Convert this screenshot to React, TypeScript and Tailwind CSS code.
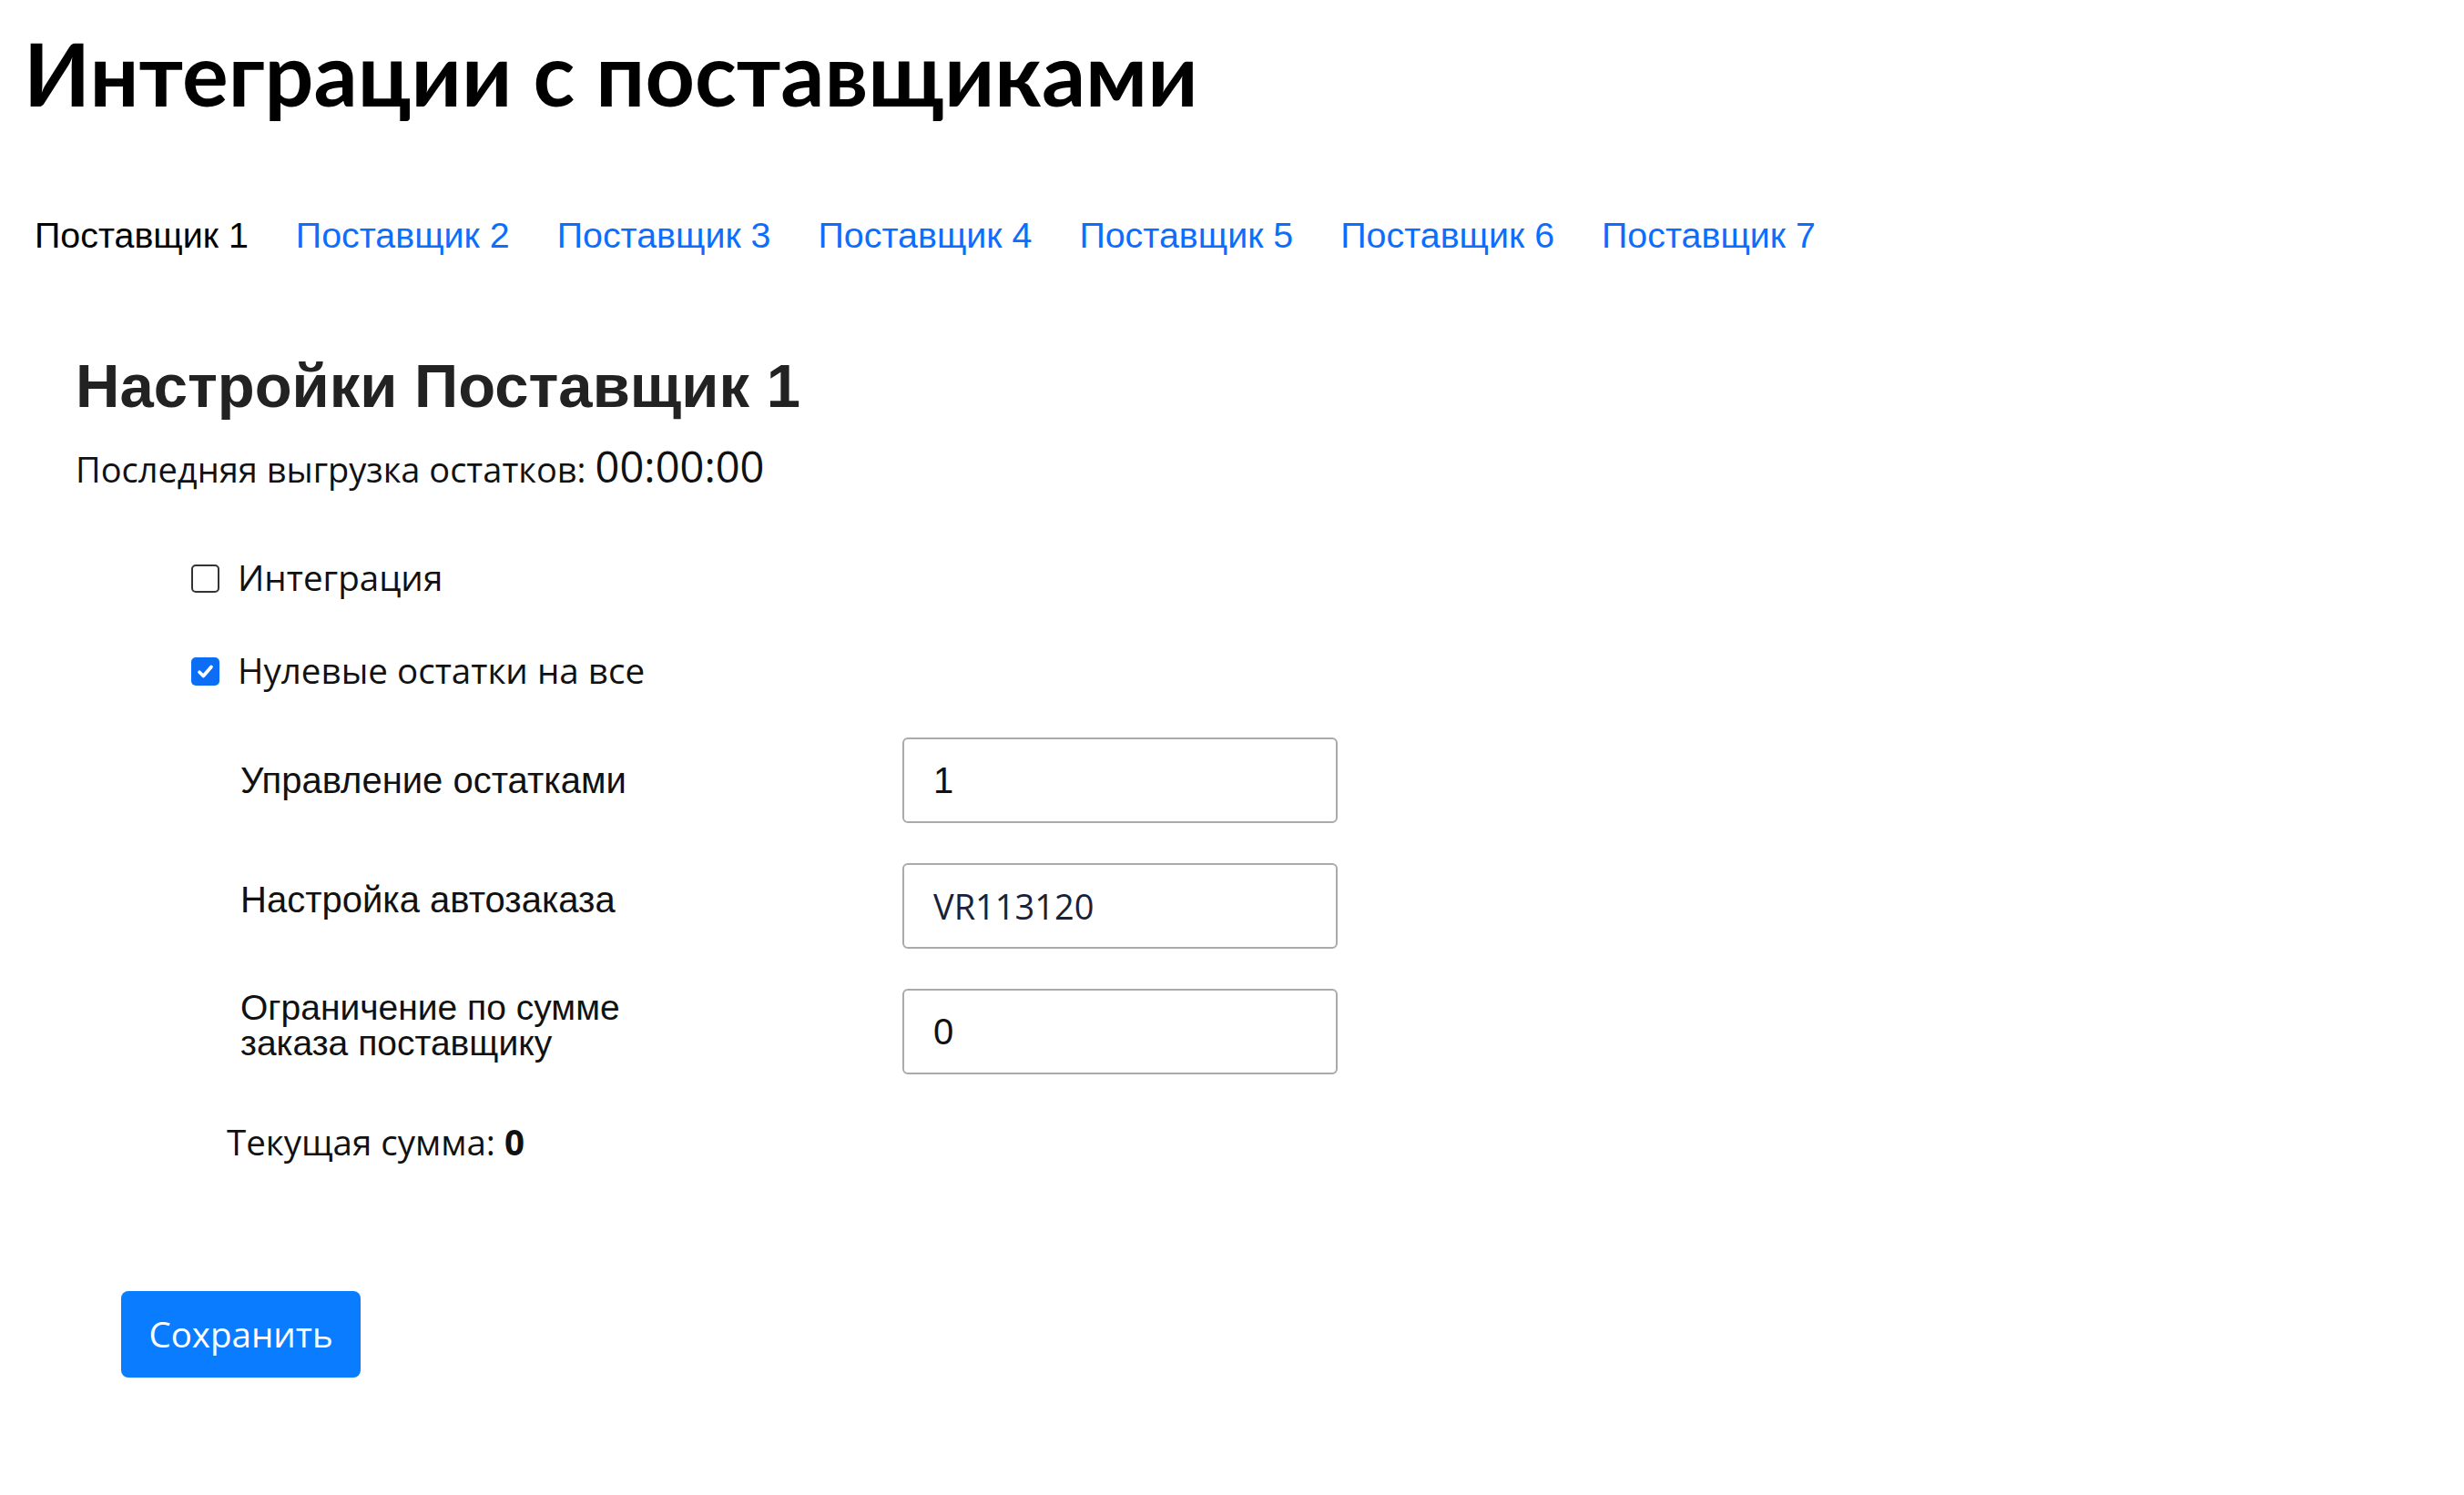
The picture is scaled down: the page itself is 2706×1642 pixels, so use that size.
import React from 'react';

const suppliers = [
  'Поставщик 1',
  'Поставщик 2',
  'Поставщик 3',
  'Поставщик 4',
  'Поставщик 5',
  'Поставщик 6',
  'Поставщик 7',
];

const Checkbox: React.FC<{ checked?: boolean }> = ({ checked }) =>
  checked ? (
    <span className="flex h-[31px] w-[31px] shrink-0 items-center justify-center rounded-[5px] bg-[#0b6ef5]">
      <svg viewBox="0 0 16 16" className="h-[23px] w-[23px]" fill="none" stroke="white" strokeWidth="2.6" strokeLinecap="round" strokeLinejoin="round">
        <path d="M3.5 8.5l3 3 6-7" />
      </svg>
    </span>
  ) : (
    <span className="h-[31px] w-[31px] shrink-0 rounded-[5px] border-[2.5px] border-[#333] bg-white" />
  );

const App: React.FC = () => {
  return (
    <div className="min-h-screen bg-white text-[#212529]">
      <h1 className="pl-[26px] pt-[23px] font-['Lato',sans-serif] text-[95px] font-bold leading-[1.2] text-black">
        Интеграции с поставщиками
      </h1>

      {/* Tabs */}
      <nav className="mt-[97px] flex gap-[52px] pl-[38px] font-['Liberation_Sans',Arial,sans-serif] text-[39.4px] leading-[48px]">
        {suppliers.map((s, i) => (
          <a key={s} href="#" className={i === 0 ? 'text-black' : 'text-[#0d6efd]'}>
            {s}
          </a>
        ))}
      </nav>

      <h2 className="mt-[102px] pl-[83px] font-['Liberation_Sans',Arial,sans-serif] text-[67px] font-bold leading-[1.2] text-[#222]">
        Настройки Поставщик 1
      </h2>
      <p className="mt-[22px] flex items-baseline pl-[83px] font-['Open_Sans',sans-serif] text-[38px] leading-[52px] text-[#111]">
        <span>Последняя выгрузка остатков:</span>
        <span className="ml-[10px] text-[47px]">00:00:00</span>
      </p>

      {/* Flags */}
      <label className="mt-[68px] flex h-[52px] items-center gap-[20px] pl-[210px] font-['Open_Sans',sans-serif] text-[38.6px] text-[#111]">
        <Checkbox />
        <span>Интеграция</span>
      </label>
      <label className="mt-[50px] flex h-[52px] items-center gap-[20px] pl-[210px] font-['Open_Sans',sans-serif] text-[38.6px] text-[#111]">
        <Checkbox checked />
        <span>Нулевые остатки на все</span>
      </label>

      {/* Fields */}
      <div className="mt-[47px] flex flex-col gap-[44px] pl-[264px] font-['Liberation_Sans',Arial,sans-serif] text-[40px] text-[#111]">
        <div className="flex items-center">
          <span className="w-[727px] leading-[48px]">Управление остатками</span>
          <div className="flex h-[94px] w-[478px] items-center rounded-[6px] border-2 border-[#aaa] px-[32px] leading-none">1</div>
        </div>
        <div className="flex items-center">
          <span className="w-[727px] pb-[14px] leading-[48px]">Настройка автозаказа</span>
          <div className="flex h-[94px] w-[478px] items-center rounded-[6px] border-2 border-[#aaa] px-[32px] font-['Open_Sans',sans-serif] text-[38px] leading-none text-[#1a1f3a]">
            VR113120
          </div>
        </div>
        <div className="flex items-center">
          <span className="w-[727px] pb-[14px] text-[39px] leading-[39px]">
            Ограничение по сумме
            <br />
            заказа поставщику
          </span>
          <div className="flex h-[94px] w-[478px] items-center rounded-[6px] border-2 border-[#aaa] px-[32px] leading-none">0</div>
        </div>
      </div>

      <p className="mt-[48px] pl-[249px] font-['Open_Sans',sans-serif] text-[38.5px] leading-[52px] text-[#111]">
        Текущая сумма: <b className="font-bold">0</b>
      </p>

      <div className="mt-[138px] pl-[133px] pb-[120px]">
        <button className="flex h-[95px] w-[263px] items-center justify-center rounded-[8px] bg-[#0a7cff] font-['Open_Sans',sans-serif] text-[38.5px] text-white">
          Сохранить
        </button>
      </div>
    </div>
  );
};

export default App;
